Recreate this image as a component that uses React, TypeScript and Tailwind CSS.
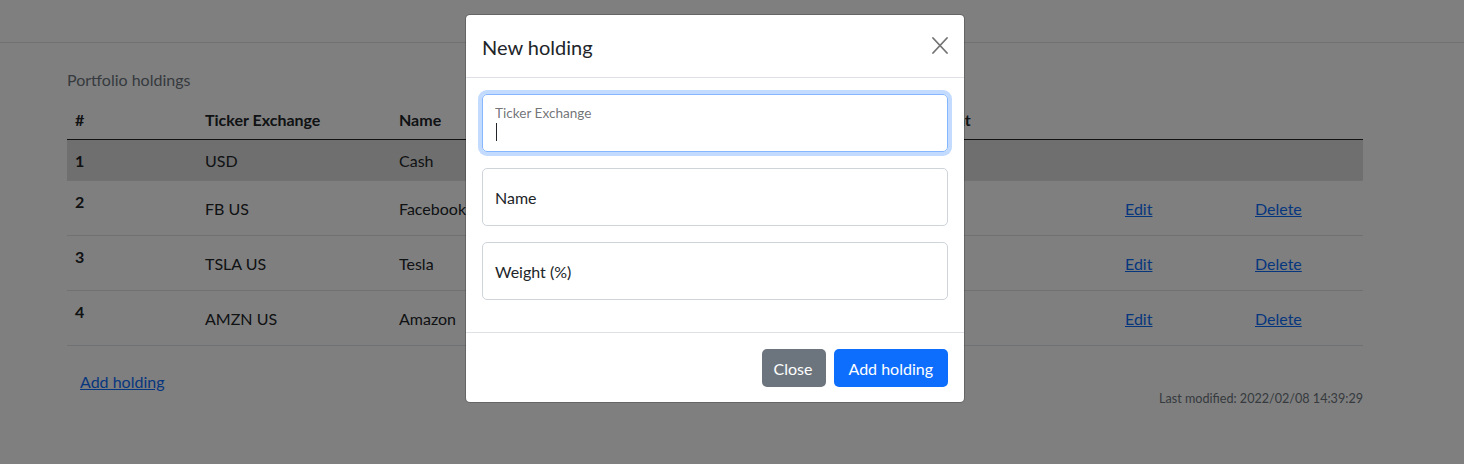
import React from "react";

const rows = [
  { n: "1", t: "USD", name: "Cash", type: "Cash", w: "10", active: true },
  { n: "2", t: "FB US", name: "Facebook", type: "Equity", w: "30" },
  { n: "3", t: "TSLA US", name: "Tesla", type: "Equity", w: "30" },
  { n: "4", t: "AMZN US", name: "Amazon", type: "Equity", w: "30" },
];

export default function App() {
  return (
    <div className="relative h-[464px] w-[1464px] overflow-hidden bg-white text-[#212529] font-['Lato','Liberation_Sans',Arial,sans-serif] text-[16px] leading-6">
      <nav className="h-[43px] border-b border-[#dee2e6] bg-white"></nav>
      <main className="ml-[67px] w-[1296px] pt-[16px]">
        <div className="pt-[9px] pb-[7px] text-[#6c757d]">Portfolio holdings</div>
        <table className="w-full table-fixed border-separate border-spacing-0 text-left">
          <colgroup>
            <col className="w-[130px]" />
            <col className="w-[194px]" />
            <col className="w-[259px]" />
            <col className="w-[261px]" />
            <col className="w-[194px]" />
            <col className="w-[130px]" />
            <col className="w-[128px]" />
          </colgroup>
          <thead>
            <tr>
              <th className="border-b border-[#212529] px-2 pt-[9px] pb-[7px] font-bold">#</th>
              <th className="border-b border-[#212529] px-2 pt-[9px] pb-[7px] font-bold">Ticker Exchange</th>
              <th className="border-b border-[#212529] px-2 pt-[9px] pb-[7px] font-bold">Name</th>
              <th className="border-b border-[#212529] px-2 pt-[9px] pb-[7px] font-bold">Type</th>
              <th className="border-b border-[#212529] px-2 pt-[9px] pb-[7px] font-bold">Weight</th>
              <th className="border-b border-[#212529] px-2 pt-[9px] pb-[7px]"></th>
              <th className="border-b border-[#212529] px-2 pt-[9px] pb-[7px]"></th>
            </tr>
          </thead>
          <tbody>
            {rows.map((r) => (
              <tr key={r.n} className={r.active ? "bg-[#dedede]" : ""}>
                <th className="border-b border-[#dee2e6] px-2 pt-[9px] pb-[7px] align-top font-bold">{r.n}</th>
                <td className="border-b border-[#dee2e6] px-2 pt-[9px] pb-[7px] align-middle">{r.t}</td>
                <td className="border-b border-[#dee2e6] px-2 pt-[9px] pb-[7px] align-middle">{r.name}</td>
                <td className="border-b border-[#dee2e6] px-2 pt-[9px] pb-[7px] align-middle">{r.type}</td>
                <td className="border-b border-[#dee2e6] px-2 pt-[9px] pb-[7px] align-middle">{r.w}</td>
                <td className="border-b border-[#dee2e6] px-2 py-2 align-middle">
                  {!r.active && (
                    <span className="inline-block px-3 pt-[8px] pb-[6px] text-[#0d6efd] underline">Edit</span>
                  )}
                </td>
                <td className="border-b border-[#dee2e6] px-2 py-2 align-middle">
                  {!r.active && (
                    <span className="inline-block px-3 pt-[8px] pb-[6px] text-[#0d6efd] underline">Delete</span>
                  )}
                </td>
              </tr>
            ))}
          </tbody>
        </table>
        <div className="mt-[17px] flex items-start justify-between">
          <span className="inline-block pl-[13px] pr-3 py-[7px] text-[#0d6efd] underline">Add holding</span>
          <span className="mt-[25px] text-[12.6px] leading-[21px] text-[#6c757d]">
            Last modified: 2022/02/08 14:39:29
          </span>
        </div>
      </main>

      <div className="absolute inset-0 bg-[rgba(0,0,0,0.5)]"></div>

      <div className="absolute left-[465px] top-[14px] w-[500px] rounded-[5px] border border-[rgba(0,0,0,0.2)] bg-white bg-clip-padding">
        <div className="flex h-[63px] items-center justify-between border-b border-[#dee2e6] pl-4 pr-[16px]">
          <h5 className="mt-[2px] text-[20px] leading-6 font-normal">New holding</h5>
          <svg width="16" height="17" viewBox="0 0 16 17" className="mb-[2px]">
            <path d="M1 1 L15 16 M15 1 L1 16" stroke="#000" strokeOpacity="0.55" strokeWidth="1.8" strokeLinecap="round" />
          </svg>
        </div>
        <div className="p-4">
          <div className="relative mb-4 h-[58px] rounded-[5px] border border-[#86b7fe] shadow-[0_0_0_4px_rgba(13,110,253,0.25)]">
            <div className="absolute left-[12px] top-[8px] text-[13.6px] leading-5 text-[rgba(33,37,41,0.65)]">Ticker Exchange</div>
            <div className="absolute left-[13px] top-[28px] h-[18px] w-px bg-[#212529]"></div>
          </div>
          <div className="mb-4 flex h-[58px] items-center rounded-[5px] border border-[#ced4da] px-3 pt-[2px]">
            <span>Name</span>
          </div>
          <div className="mb-4 flex h-[58px] items-center rounded-[5px] border border-[#ced4da] px-3 pt-[2px]">
            <span>Weight (%)</span>
          </div>
        </div>
        <div className="flex items-center justify-end gap-2 border-t border-[#dee2e6] px-4 pt-4 pb-[15px]">
          <span className="inline-block rounded-[5px] bg-[#6c757d] pl-[12px] pr-[13px] pt-[8px] pb-[6px] text-white">Close</span>
          <span className="inline-block rounded-[5px] bg-[#0d6efd] px-[15px] pt-[8px] pb-[6px] text-white">Add holding</span>
        </div>
      </div>
    </div>
  );
}
